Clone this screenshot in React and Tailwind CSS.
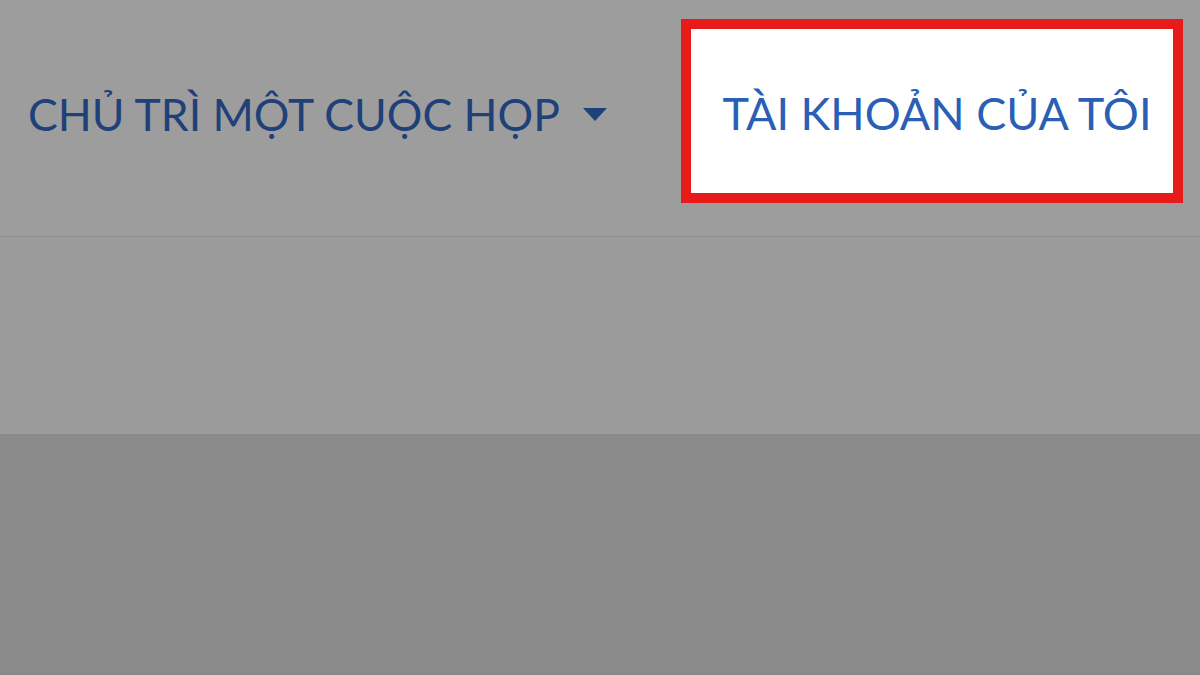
export default function App() {
  return (
    <div className="h-[675px] w-[1200px] overflow-hidden bg-[#8a8a8a]" style={{ fontFamily: "Lato, 'Noto Sans', sans-serif" }}>
      <header className="flex h-[236px] items-start bg-[#9d9d9d]">
        <button className="mt-[91px] ml-[28px] flex items-center gap-[23px] text-[#1f4079]">
          <span className="text-[44.5px] leading-[45px]">CHỦ TRÌ MỘT CUỘC HỌP</span>
          <svg width="24" height="13" viewBox="0 0 24 13" className="mt-[2px]">
            <polygon points="0,0 24,0 12,13" fill="#1f4079" />
          </svg>
        </button>
        <div className="mt-[19px] ml-auto mr-[17px] flex h-[184px] w-[502px] items-center justify-center border-[10px] border-[#e81b1b] bg-white">
          <span className="mt-[4px] ml-[10px] text-[45px] leading-[45px] text-[#2a5fb5]">TÀI KHOẢN CỦA TÔI</span>
        </div>
      </header>
      <div className="h-px bg-[#8f8f8f]" />
      <div className="h-[197px] bg-[#9b9b9b]" />
      <div className="h-[241px] bg-[#8a8a8a]" />
    </div>
  )
}
